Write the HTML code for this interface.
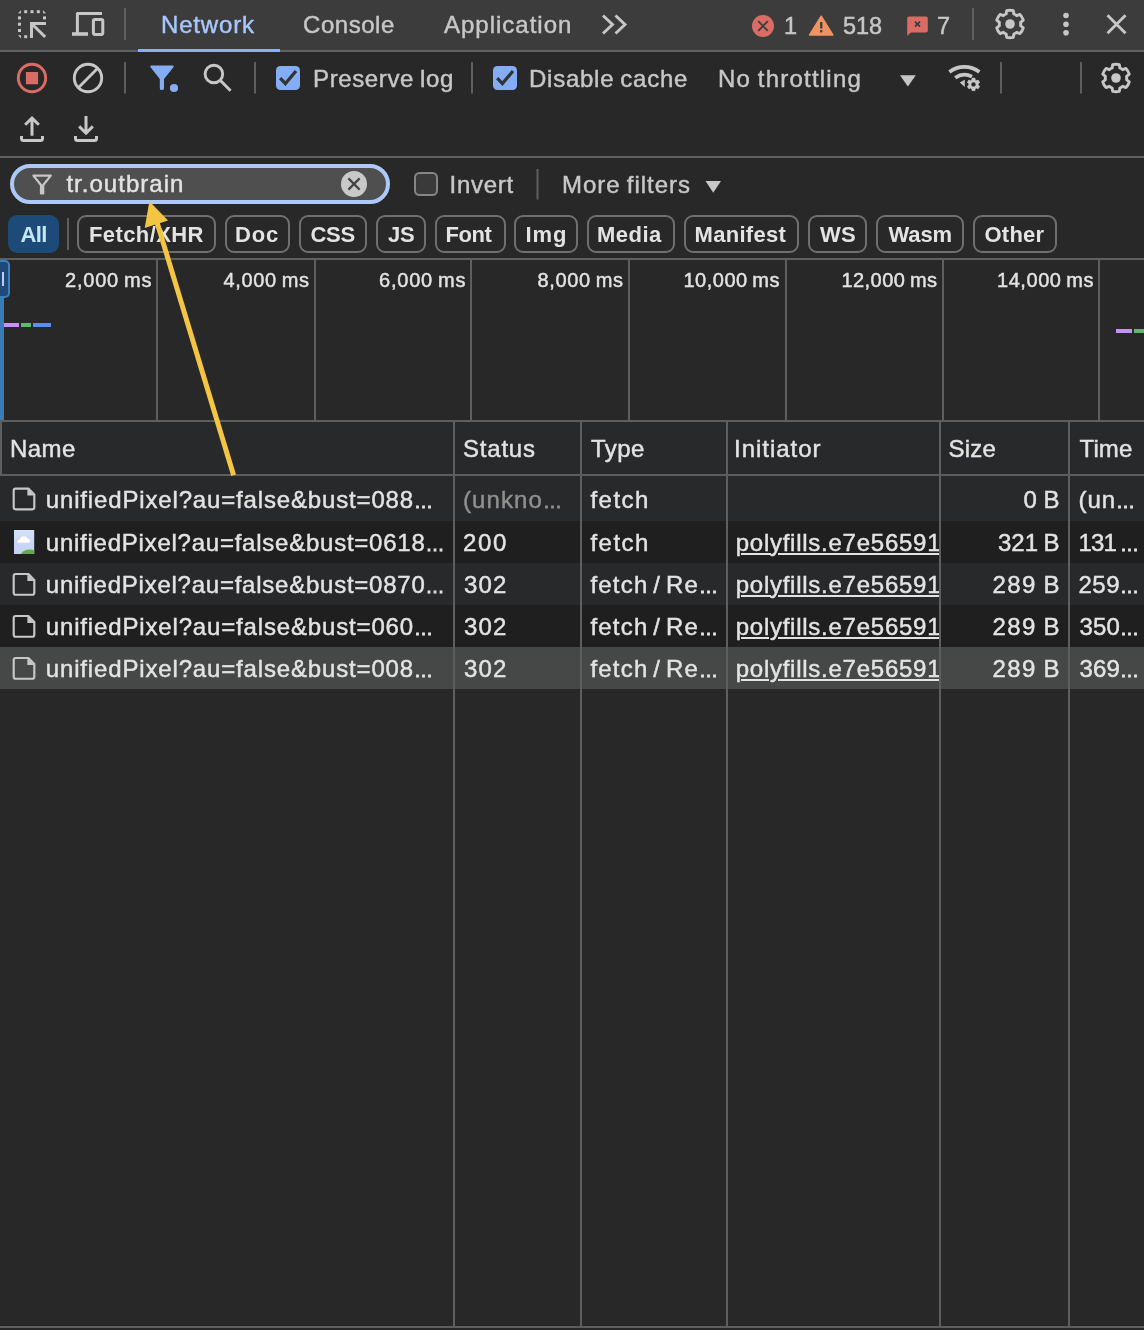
<!DOCTYPE html>
<html lang="en">
<head>
<meta charset="utf-8">
<title>DevTools - Network</title>
<style>
html,body{margin:0;padding:0;background:#282828;}
body{width:1144px;height:1330px;position:relative;overflow:hidden;font-family:"Liberation Sans",sans-serif;}
.a{position:absolute;}
.t{position:absolute;white-space:nowrap;line-height:1;font-family:"Liberation Sans",sans-serif;}
.ln{position:absolute;background:#5e5e5e;}
.pill{position:absolute;top:215px;height:38px;box-sizing:border-box;border:2px solid #6f6f6f;border-radius:9px;}
.pill.sel{border:none;background:#1d4a77;}
svg{position:absolute;left:0;top:0;}
</style>
</head>
<body>
<!-- backgrounds -->
<div class="a" style="left:0;top:0;width:1144px;height:50px;background:#3c3c3c"></div>
<div class="ln" style="left:0;top:50px;width:1144px;height:2px"></div>
<div class="a" style="left:138px;top:49px;width:142px;height:3px;background:#86b0f7"></div>
<div class="ln" style="left:0;top:156px;width:1144px;height:2px"></div>
<div class="ln" style="left:0;top:258px;width:1144px;height:2px"></div>
<!-- filter input -->
<div class="a" style="left:10px;top:163.8px;width:380px;height:40.4px;box-sizing:border-box;border:4.2px solid #adc9f8;border-radius:20.2px;background:#4f4f4f"></div>
<!-- invert checkbox -->
<div class="a" style="left:414px;top:172px;width:24px;height:24px;box-sizing:border-box;border:2px solid #858585;border-radius:5.5px;background:#3a3a3a"></div>
<!-- pills -->
<div class="pill sel" style="left:8px;width:51px"></div>
<div class="pill" style="left:77px;width:139px"></div>
<div class="pill" style="left:225px;width:65px"></div>
<div class="pill" style="left:298.5px;width:68.5px"></div>
<div class="pill" style="left:375.5px;width:50.5px"></div>
<div class="pill" style="left:434.5px;width:71.0px"></div>
<div class="pill" style="left:514px;width:64px"></div>
<div class="pill" style="left:586.5px;width:88.0px"></div>
<div class="pill" style="left:683.5px;width:115.0px"></div>
<div class="pill" style="left:807.5px;width:59.5px"></div>
<div class="pill" style="left:875.5px;width:88.0px"></div>
<div class="pill" style="left:972.5px;width:84.0px"></div>

<div class="ln" style="left:67px;top:218px;width:2px;height:32px"></div>
<!-- overview -->
<div class="ln" style="left:156px;top:260px;width:2px;height:160px"></div>
<div class="ln" style="left:313.5px;top:260px;width:2px;height:160px"></div>
<div class="ln" style="left:470px;top:260px;width:2px;height:160px"></div>
<div class="ln" style="left:627.5px;top:260px;width:2px;height:160px"></div>
<div class="ln" style="left:784.5px;top:260px;width:2px;height:160px"></div>
<div class="ln" style="left:942px;top:260px;width:2px;height:160px"></div>
<div class="ln" style="left:1098px;top:260px;width:2px;height:160px"></div>
<div class="a" style="left:0;top:297px;width:4px;height:123px;background:#397db4"></div>
<div class="a" style="left:-4px;top:260px;width:14px;height:38px;box-sizing:border-box;border:2px solid #3b80bf;border-radius:5px;background:#1f4a75"></div>
<div class="a" style="left:2px;top:272px;width:2.1px;height:14px;background:#b8ccff"></div>
<div class="a" style="left:4px;top:322.8px;width:15px;height:4.3px;background:#c891f5"></div>
<div class="a" style="left:20.8px;top:322.8px;width:10.2px;height:4.3px;background:#5fb86e"></div>
<div class="a" style="left:33px;top:322.8px;width:18px;height:4.3px;background:#5e8cee"></div>
<div class="a" style="left:1115.8px;top:328.8px;width:16.5px;height:4.2px;background:#c891f5"></div>
<div class="a" style="left:1134.4px;top:328.8px;width:10px;height:4.2px;background:#5fb86e"></div>
<!-- grid -->
<div class="a" style="left:0;top:422px;width:1144px;height:99px;background:#28292b"></div>
<div class="a" style="left:0;top:521px;width:1144px;height:42px;background:#1f1f1f"></div>
<div class="a" style="left:0;top:563px;width:1144px;height:42px;background:#28292b"></div>
<div class="a" style="left:0;top:605px;width:1144px;height:42px;background:#1f1f1f"></div>
<div class="a" style="left:0;top:647px;width:1144px;height:42px;background:#464848"></div>
<div class="ln" style="left:0;top:420px;width:1144px;height:2px"></div>
<div class="ln" style="left:0;top:474px;width:1144px;height:2px"></div>
<div class="ln" style="left:0;top:422px;width:2px;height:53px"></div>
<div class="ln" style="left:453px;top:422px;width:2px;height:904px"></div>
<div class="ln" style="left:580px;top:422px;width:2px;height:904px"></div>
<div class="ln" style="left:726px;top:422px;width:2px;height:904px"></div>
<div class="ln" style="left:939px;top:422px;width:2px;height:904px"></div>
<div class="ln" style="left:1068px;top:422px;width:2px;height:904px"></div>
<div class="ln" style="left:0;top:1326px;width:1144px;height:2px"></div>
<!-- texts -->
<div class="a" id="txt" style="left:0;top:0;width:1144px;height:1330px;will-change:transform">
<span class="t" style="left:161.00px;top:12.68px;font-size:24px;color:#a8c7fa;letter-spacing:0.830px;word-spacing:0px;-webkit-text-stroke:0.45px currentColor;">Network</span>
<span class="t" style="left:303.00px;top:12.68px;font-size:24px;color:#c7c7c7;letter-spacing:0.549px;word-spacing:0px;-webkit-text-stroke:0.45px currentColor;">Console</span>
<span class="t" style="left:444.00px;top:12.68px;font-size:24px;color:#c7c7c7;letter-spacing:0.994px;word-spacing:0px;-webkit-text-stroke:0.45px currentColor;">Application</span>
<span class="t" style="left:784.00px;top:14.81px;font-size:23.5px;color:#c7c7c7;letter-spacing:0.000px;word-spacing:0px;-webkit-text-stroke:0.45px currentColor;">1</span>
<span class="t" style="left:843.00px;top:14.81px;font-size:23.5px;color:#c7c7c7;letter-spacing:-0.070px;word-spacing:0px;-webkit-text-stroke:0.45px currentColor;">518</span>
<span class="t" style="left:937.00px;top:14.81px;font-size:23.5px;color:#c7c7c7;letter-spacing:0.000px;word-spacing:0px;-webkit-text-stroke:0.45px currentColor;">7</span>
<span class="t" style="left:313.00px;top:66.68px;font-size:24px;color:#c7c7c7;letter-spacing:0.629px;word-spacing:-1.3px;-webkit-text-stroke:0.45px currentColor;">Preserve log</span>
<span class="t" style="left:529.00px;top:66.68px;font-size:24px;color:#c7c7c7;letter-spacing:0.741px;word-spacing:-1.3px;-webkit-text-stroke:0.45px currentColor;">Disable cache</span>
<span class="t" style="left:718.00px;top:66.68px;font-size:24px;color:#c7c7c7;letter-spacing:1.229px;word-spacing:-1.3px;-webkit-text-stroke:0.45px currentColor;">No throttling</span>
<span class="t" style="left:66.40px;top:172.38px;font-size:24px;color:#e3e3e3;letter-spacing:1.021px;word-spacing:0px;-webkit-text-stroke:0.45px currentColor;">tr.outbrain</span>
<span class="t" style="left:449.60px;top:172.58px;font-size:24px;color:#c7c7c7;letter-spacing:0.709px;word-spacing:0px;-webkit-text-stroke:0.45px currentColor;">Invert</span>
<span class="t" style="left:562.00px;top:172.58px;font-size:24px;color:#c7c7c7;letter-spacing:0.965px;word-spacing:-1.3px;-webkit-text-stroke:0.45px currentColor;">More filters</span>
<span class="t" style="left:20.50px;top:224.08px;font-size:22px;color:#c2e7ff;letter-spacing:-0.600px;word-spacing:0px;-webkit-text-stroke:0px currentColor;font-weight:bold;">All</span>
<span class="t" style="left:89.00px;top:224.08px;font-size:22px;color:#e3e3e3;letter-spacing:0.394px;word-spacing:0px;-webkit-text-stroke:0px currentColor;font-weight:bold;">Fetch/XHR</span>
<span class="t" style="left:235.00px;top:224.08px;font-size:22px;color:#e3e3e3;letter-spacing:0.837px;word-spacing:0px;-webkit-text-stroke:0px currentColor;font-weight:bold;">Doc</span>
<span class="t" style="left:310.50px;top:224.08px;font-size:22px;color:#e3e3e3;letter-spacing:-0.281px;word-spacing:0px;-webkit-text-stroke:0px currentColor;font-weight:bold;">CSS</span>
<span class="t" style="left:388.00px;top:224.08px;font-size:22px;color:#e3e3e3;letter-spacing:-0.235px;word-spacing:0px;-webkit-text-stroke:0px currentColor;font-weight:bold;">JS</span>
<span class="t" style="left:445.50px;top:224.08px;font-size:22px;color:#e3e3e3;letter-spacing:-0.438px;word-spacing:0px;-webkit-text-stroke:0px currentColor;font-weight:bold;">Font</span>
<span class="t" style="left:525.50px;top:224.08px;font-size:22px;color:#e3e3e3;letter-spacing:0.913px;word-spacing:0px;-webkit-text-stroke:0px currentColor;font-weight:bold;">Img</span>
<span class="t" style="left:597.00px;top:224.08px;font-size:22px;color:#e3e3e3;letter-spacing:0.472px;word-spacing:0px;-webkit-text-stroke:0px currentColor;font-weight:bold;">Media</span>
<span class="t" style="left:694.50px;top:224.08px;font-size:22px;color:#e3e3e3;letter-spacing:0.299px;word-spacing:0px;-webkit-text-stroke:0px currentColor;font-weight:bold;">Manifest</span>
<span class="t" style="left:820.00px;top:224.08px;font-size:22px;color:#e3e3e3;letter-spacing:0.235px;word-spacing:0px;-webkit-text-stroke:0px currentColor;font-weight:bold;">WS</span>
<span class="t" style="left:888.50px;top:224.08px;font-size:22px;color:#e3e3e3;letter-spacing:-0.140px;word-spacing:0px;-webkit-text-stroke:0px currentColor;font-weight:bold;">Wasm</span>
<span class="t" style="left:984.50px;top:224.08px;font-size:22px;color:#e3e3e3;letter-spacing:0.222px;word-spacing:0px;-webkit-text-stroke:0px currentColor;font-weight:bold;">Other</span>
<span class="t" style="left:65.00px;top:270.27px;font-size:20px;color:#e3e3e3;letter-spacing:0.791px;word-spacing:-1.3px;-webkit-text-stroke:0.45px currentColor;">2,000 ms</span>
<span class="t" style="left:223.50px;top:270.27px;font-size:20px;color:#e3e3e3;letter-spacing:0.648px;word-spacing:-1.3px;-webkit-text-stroke:0.45px currentColor;">4,000 ms</span>
<span class="t" style="left:379.00px;top:270.27px;font-size:20px;color:#e3e3e3;letter-spacing:0.791px;word-spacing:-1.3px;-webkit-text-stroke:0.45px currentColor;">6,000 ms</span>
<span class="t" style="left:537.50px;top:270.27px;font-size:20px;color:#e3e3e3;letter-spacing:0.648px;word-spacing:-1.3px;-webkit-text-stroke:0.45px currentColor;">8,000 ms</span>
<span class="t" style="left:683.50px;top:270.27px;font-size:20px;color:#e3e3e3;letter-spacing:0.489px;word-spacing:-1.3px;-webkit-text-stroke:0.45px currentColor;">10,000 ms</span>
<span class="t" style="left:841.50px;top:270.27px;font-size:20px;color:#e3e3e3;letter-spacing:0.426px;word-spacing:-1.3px;-webkit-text-stroke:0.45px currentColor;">12,000 ms</span>
<span class="t" style="left:997.00px;top:270.27px;font-size:20px;color:#e3e3e3;letter-spacing:0.551px;word-spacing:-1.3px;-webkit-text-stroke:0.45px currentColor;">14,000 ms</span>
<span class="t" style="left:10.00px;top:436.98px;font-size:24px;color:#e3e3e3;letter-spacing:0.443px;word-spacing:0px;-webkit-text-stroke:0.45px currentColor;">Name</span>
<span class="t" style="left:463.00px;top:436.98px;font-size:24px;color:#e3e3e3;letter-spacing:0.792px;word-spacing:0px;-webkit-text-stroke:0.45px currentColor;">Status</span>
<span class="t" style="left:591.00px;top:436.98px;font-size:24px;color:#e3e3e3;letter-spacing:0.439px;word-spacing:0px;-webkit-text-stroke:0.45px currentColor;">Type</span>
<span class="t" style="left:734.00px;top:436.98px;font-size:24px;color:#e3e3e3;letter-spacing:0.974px;word-spacing:0px;-webkit-text-stroke:0.45px currentColor;">Initiator</span>
<span class="t" style="left:948.50px;top:436.98px;font-size:24px;color:#e3e3e3;letter-spacing:0.220px;word-spacing:0px;-webkit-text-stroke:0.45px currentColor;">Size</span>
<span class="t" style="left:1079.50px;top:436.98px;font-size:24px;color:#e3e3e3;letter-spacing:0.135px;word-spacing:0px;-webkit-text-stroke:0.45px currentColor;">Time</span>
<span class="t" style="left:45.80px;top:487.58px;font-size:24px;color:#e3e3e3;letter-spacing:0.842px;word-spacing:0px;-webkit-text-stroke:0.45px currentColor;">unifiedPixel?au=false&amp;bust=088<span style="font-size:19px;letter-spacing:0;-webkit-text-stroke-width:0.9px">…</span></span>
<span class="t" style="left:463.00px;top:487.58px;font-size:24px;color:#8f8f8f;letter-spacing:1.103px;word-spacing:0px;-webkit-text-stroke:0.45px currentColor;">(unkno<span style="font-size:19px;letter-spacing:0;-webkit-text-stroke-width:0.9px">…</span></span>
<span class="t" style="left:590.50px;top:487.58px;font-size:24px;color:#e3e3e3;letter-spacing:1.454px;word-spacing:0px;-webkit-text-stroke:0.45px currentColor;">fetch</span>
<span class="t" style="left:1023.50px;top:487.58px;font-size:24px;color:#e3e3e3;letter-spacing:0.642px;word-spacing:-1.3px;-webkit-text-stroke:0.45px currentColor;">0 B</span>
<span class="t" style="left:1078.50px;top:487.58px;font-size:24px;color:#e3e3e3;letter-spacing:0.938px;word-spacing:0px;-webkit-text-stroke:0.45px currentColor;">(un<span style="font-size:19px;letter-spacing:0;-webkit-text-stroke-width:0.9px">…</span></span>
<span class="t" style="left:45.80px;top:530.53px;font-size:24px;color:#e3e3e3;letter-spacing:0.756px;word-spacing:0px;-webkit-text-stroke:0.45px currentColor;">unifiedPixel?au=false&amp;bust=0618<span style="font-size:19px;letter-spacing:0;-webkit-text-stroke-width:0.9px">…</span></span>
<span class="t" style="left:463.00px;top:530.53px;font-size:24px;color:#e3e3e3;letter-spacing:1.652px;word-spacing:0px;-webkit-text-stroke:0.45px currentColor;">200</span>
<span class="t" style="left:590.50px;top:530.53px;font-size:24px;color:#e3e3e3;letter-spacing:1.454px;word-spacing:0px;-webkit-text-stroke:0.45px currentColor;">fetch</span>
<span class="t" style="left:735.70px;top:530.53px;font-size:24px;color:#e3e3e3;letter-spacing:0.747px;word-spacing:0px;-webkit-text-stroke:0.45px currentColor;text-decoration:underline;text-decoration-thickness:1.9px;text-underline-offset:1.7px;overflow:hidden;padding-bottom:5px;width:203.70px;">polyfills.e7e56591</span>
<span class="t" style="left:998.00px;top:530.53px;font-size:24px;color:#e3e3e3;letter-spacing:0.022px;word-spacing:-1.3px;-webkit-text-stroke:0.45px currentColor;">321 B</span>
<span class="t" style="left:1078.50px;top:530.53px;font-size:24px;color:#e3e3e3;letter-spacing:-0.803px;word-spacing:-2px;-webkit-text-stroke:0.45px currentColor;">131 <span style="font-size:19px;letter-spacing:0;-webkit-text-stroke-width:0.9px">…</span></span>
<span class="t" style="left:45.80px;top:572.68px;font-size:24px;color:#e3e3e3;letter-spacing:0.756px;word-spacing:0px;-webkit-text-stroke:0.45px currentColor;">unifiedPixel?au=false&amp;bust=0870<span style="font-size:19px;letter-spacing:0;-webkit-text-stroke-width:0.9px">…</span></span>
<span class="t" style="left:464.00px;top:572.68px;font-size:24px;color:#e3e3e3;letter-spacing:1.152px;word-spacing:0px;-webkit-text-stroke:0.45px currentColor;">302</span>
<span class="t" style="left:590.50px;top:572.68px;font-size:24px;color:#e3e3e3;letter-spacing:1.179px;word-spacing:-3px;-webkit-text-stroke:0.45px currentColor;">fetch / Re<span style="font-size:19px;letter-spacing:0;-webkit-text-stroke-width:0.9px">…</span></span>
<span class="t" style="left:735.70px;top:572.68px;font-size:24px;color:#e3e3e3;letter-spacing:0.747px;word-spacing:0px;-webkit-text-stroke:0.45px currentColor;text-decoration:underline;text-decoration-thickness:1.9px;text-underline-offset:1.7px;overflow:hidden;padding-bottom:5px;width:203.70px;">polyfills.e7e56591</span>
<span class="t" style="left:992.50px;top:572.68px;font-size:24px;color:#e3e3e3;letter-spacing:1.397px;word-spacing:-1.3px;-webkit-text-stroke:0.45px currentColor;">289 B</span>
<span class="t" style="left:1078.50px;top:572.68px;font-size:24px;color:#e3e3e3;letter-spacing:0.486px;word-spacing:0px;-webkit-text-stroke:0.45px currentColor;">259<span style="font-size:19px;letter-spacing:0;-webkit-text-stroke-width:0.9px">…</span></span>
<span class="t" style="left:45.80px;top:614.83px;font-size:24px;color:#e3e3e3;letter-spacing:0.842px;word-spacing:0px;-webkit-text-stroke:0.45px currentColor;">unifiedPixel?au=false&amp;bust=060<span style="font-size:19px;letter-spacing:0;-webkit-text-stroke-width:0.9px">…</span></span>
<span class="t" style="left:464.00px;top:614.83px;font-size:24px;color:#e3e3e3;letter-spacing:1.152px;word-spacing:0px;-webkit-text-stroke:0.45px currentColor;">302</span>
<span class="t" style="left:590.50px;top:614.83px;font-size:24px;color:#e3e3e3;letter-spacing:1.179px;word-spacing:-3px;-webkit-text-stroke:0.45px currentColor;">fetch / Re<span style="font-size:19px;letter-spacing:0;-webkit-text-stroke-width:0.9px">…</span></span>
<span class="t" style="left:735.70px;top:614.83px;font-size:24px;color:#e3e3e3;letter-spacing:0.747px;word-spacing:0px;-webkit-text-stroke:0.45px currentColor;text-decoration:underline;text-decoration-thickness:1.9px;text-underline-offset:1.7px;overflow:hidden;padding-bottom:5px;width:203.70px;">polyfills.e7e56591</span>
<span class="t" style="left:992.50px;top:614.83px;font-size:24px;color:#e3e3e3;letter-spacing:1.397px;word-spacing:-1.3px;-webkit-text-stroke:0.45px currentColor;">289 B</span>
<span class="t" style="left:1079.50px;top:614.83px;font-size:24px;color:#e3e3e3;letter-spacing:0.152px;word-spacing:0px;-webkit-text-stroke:0.45px currentColor;">350<span style="font-size:19px;letter-spacing:0;-webkit-text-stroke-width:0.9px">…</span></span>
<span class="t" style="left:45.80px;top:656.98px;font-size:24px;color:#e3e3e3;letter-spacing:0.842px;word-spacing:0px;-webkit-text-stroke:0.45px currentColor;">unifiedPixel?au=false&amp;bust=008<span style="font-size:19px;letter-spacing:0;-webkit-text-stroke-width:0.9px">…</span></span>
<span class="t" style="left:464.00px;top:656.98px;font-size:24px;color:#e3e3e3;letter-spacing:1.152px;word-spacing:0px;-webkit-text-stroke:0.45px currentColor;">302</span>
<span class="t" style="left:590.50px;top:656.98px;font-size:24px;color:#e3e3e3;letter-spacing:1.179px;word-spacing:-3px;-webkit-text-stroke:0.45px currentColor;">fetch / Re<span style="font-size:19px;letter-spacing:0;-webkit-text-stroke-width:0.9px">…</span></span>
<span class="t" style="left:735.70px;top:656.98px;font-size:24px;color:#e3e3e3;letter-spacing:0.747px;word-spacing:0px;-webkit-text-stroke:0.45px currentColor;text-decoration:underline;text-decoration-thickness:1.9px;text-underline-offset:1.7px;overflow:hidden;padding-bottom:5px;width:203.70px;">polyfills.e7e56591</span>
<span class="t" style="left:992.50px;top:656.98px;font-size:24px;color:#e3e3e3;letter-spacing:1.397px;word-spacing:-1.3px;-webkit-text-stroke:0.45px currentColor;">289 B</span>
<span class="t" style="left:1079.50px;top:656.98px;font-size:24px;color:#e3e3e3;letter-spacing:0.152px;word-spacing:0px;-webkit-text-stroke:0.45px currentColor;">369<span style="font-size:19px;letter-spacing:0;-webkit-text-stroke-width:0.9px">…</span></span>
</div>
<!-- icons -->
<svg width="1144" height="1330" viewBox="0 0 1144 1330" fill="none">
<rect x="24.2" y="10.2" width="3" height="3" fill="#c7c7c7"/>
<rect x="30.5" y="10.2" width="3" height="3" fill="#c7c7c7"/>
<rect x="36.8" y="10.2" width="3" height="3" fill="#c7c7c7"/>
<rect x="18" y="16.4" width="3" height="3" fill="#c7c7c7"/>
<rect x="18" y="22.7" width="3" height="3" fill="#c7c7c7"/>
<rect x="18" y="29" width="3" height="3" fill="#c7c7c7"/>
<rect x="43" y="16.4" width="3" height="3" fill="#c7c7c7"/>
<rect x="24.2" y="35.2" width="3" height="3" fill="#c7c7c7"/>
<path d="M21,10.2V13.2H18Z M43,10.2L46,13.2H43Z M18,35.2L21,38.2V35.2Z" fill="#c7c7c7"/>
<path d="M46,23.5H31.5V38" stroke="#c7c7c7" stroke-width="3"/>
<path d="M32.5,24.5L45.2,37" stroke="#c7c7c7" stroke-width="3"/>
<path d="M102,13.4H77.4V33" stroke="#c7c7c7" stroke-width="3" stroke-linejoin="round"/>
<path d="M72,34H88" stroke="#c7c7c7" stroke-width="3.6"/>
<rect x="93.4" y="19.4" width="9.4" height="15" rx="1.6" stroke="#c7c7c7" stroke-width="3"/>
<rect x="124" y="8" width="2" height="32" fill="#5e5e5e"/>
<rect x="972" y="8" width="2" height="32" fill="#5e5e5e"/>
<path d="M603,15.5L612.5,24.5L603,33.5M615.5,15.5L625,24.5L615.5,33.5" stroke="#c7c7c7" stroke-width="2.9"/>
<circle cx="763" cy="26" r="11" fill="#d96c65"/>
<path d="M758.2,21.2L767.8,30.8M767.8,21.2L758.2,30.8" stroke="#3c3c3c" stroke-width="1.8"/>
<path d="M821.2,16.2L832.8,35H809.6Z" fill="#ee9462" stroke="#ee9462" stroke-width="1.5" stroke-linejoin="round"/>
<rect x="820.1" y="22" width="2.3" height="6.5" fill="#3c3c3c"/><rect x="820.1" y="30" width="2.3" height="2.4" fill="#3c3c3c"/>
<path d="M909,16.5H926Q927.8,16.5 927.8,18.3V30.7Q927.8,32.5 926,32.5H911L907.2,36V18.3Q907.2,16.5 909,16.5Z" fill="#d96c65"/>
<path d="M915,21.7L920,26.7M920,21.7L915,26.7" stroke="#3c3c3c" stroke-width="1.8"/>
<path d="M1013.83,14.01L1013.34,10.61A13.80,13.80 0 0 0 1006.66,10.61L1006.17,14.01A10.70,10.70 0 0 0 1003.27,15.68L1000.07,14.41A13.80,13.80 0 0 0 996.73,20.20L999.43,22.33A10.70,10.70 0 0 0 999.43,25.67L996.73,27.80A13.80,13.80 0 0 0 1000.07,33.59L1003.27,32.32A10.70,10.70 0 0 0 1006.17,33.99L1006.66,37.39A13.80,13.80 0 0 0 1013.34,37.39L1013.83,33.99A10.70,10.70 0 0 0 1016.73,32.32L1019.93,33.59A13.80,13.80 0 0 0 1023.27,27.80L1020.57,25.67A10.70,10.70 0 0 0 1020.57,22.33L1023.27,20.20A13.80,13.80 0 0 0 1019.93,14.41L1016.73,15.68A10.70,10.70 0 0 0 1013.83,14.01Z" stroke="#c7c7c7" stroke-width="2.9" stroke-linejoin="round"/>
<circle cx="1010" cy="24" r="4.8" fill="#c7c7c7"/>
<circle cx="1066" cy="15.5" r="2.8" fill="#c7c7c7"/>
<circle cx="1066" cy="24.2" r="2.8" fill="#c7c7c7"/>
<circle cx="1066" cy="32.7" r="2.8" fill="#c7c7c7"/>
<path d="M1107.5,15.2L1125.5,33.2M1125.5,15.2L1107.5,33.2" stroke="#c7c7c7" stroke-width="2.9"/>
<circle cx="32" cy="78" r="13.7" stroke="#d96c65" stroke-width="2.9"/>
<rect x="25.9" y="72.1" width="12.2" height="12.2" rx="0.4" fill="#d96c65"/>
<circle cx="88" cy="78" r="13.7" stroke="#c7c7c7" stroke-width="2.9"/>
<path d="M78.3,87.7L97.7,68.3" stroke="#c7c7c7" stroke-width="2.9"/>
<rect x="124" y="62" width="2" height="31.5" fill="#5e5e5e"/>
<rect x="254" y="62" width="2" height="31.5" fill="#5e5e5e"/>
<rect x="471" y="62" width="2" height="31.5" fill="#5e5e5e"/>
<rect x="1000" y="62" width="2" height="31.5" fill="#5e5e5e"/>
<rect x="1080" y="62" width="2" height="31.5" fill="#5e5e5e"/>
<path d="M151.4,65.6H172.6Q174.6,65.6 173.4,67.2L164,79V88.2Q164,90.1 162,90.1H161.8Q159.8,90.1 159.8,88.2V79L150.6,67.2Q149.4,65.6 151.4,65.6Z" fill="#84adf5"/>
<circle cx="174" cy="88" r="4.1" fill="#84adf5"/>
<circle cx="213.9" cy="74" r="8.8" stroke="#c7c7c7" stroke-width="2.9"/>
<path d="M220.3,80.4L230.6,90.7" stroke="#c7c7c7" stroke-width="2.9"/>
<rect x="276" y="66" width="24" height="24" rx="4.5" fill="#84adf5"/>
<path d="M280.2,78.2L285.4,83.6L296,71" stroke="#333333" stroke-width="3.2"/>
<rect x="493" y="66" width="24" height="24" rx="4.5" fill="#84adf5"/>
<path d="M497.2,78.2L502.4,83.6L513,71" stroke="#333333" stroke-width="3.2"/>
<path d="M900,75.2H915.8L907.9,86.6Z" fill="#c7c7c7"/>
<path d="M949.4,72A24.6,24.6 0 0 1 979.4,72" stroke="#c7c7c7" stroke-width="3.6"/>
<path d="M955.2,77.8A16.5,16.5 0 0 1 972,76.6" stroke="#c7c7c7" stroke-width="3.6"/>
<path d="M959.8,82.4L964.8,79.8V86.9Z" fill="#c7c7c7"/>
<path d="M975.22,80.13L974.92,78.26A6.30,6.30 0 0 0 972.08,78.26L971.78,80.13A4.60,4.60 0 0 0 970.67,80.78L968.89,80.10A6.30,6.30 0 0 0 967.48,82.56L968.94,83.76A4.60,4.60 0 0 0 968.94,85.04L967.48,86.24A6.30,6.30 0 0 0 968.89,88.70L970.67,88.02A4.60,4.60 0 0 0 971.78,88.67L972.08,90.54A6.30,6.30 0 0 0 974.92,90.54L975.22,88.67A4.60,4.60 0 0 0 976.33,88.02L978.11,88.70A6.30,6.30 0 0 0 979.52,86.24L978.06,85.04A4.60,4.60 0 0 0 978.06,83.76L979.52,82.56A6.30,6.30 0 0 0 978.11,80.10L976.33,80.78A4.60,4.60 0 0 0 975.22,80.13Z" fill="#c7c7c7" stroke="#c7c7c7" stroke-width="0.8" stroke-linejoin="round"/>
<circle cx="973.5" cy="84.4" r="2.2" fill="#282828"/>
<path d="M1119.83,68.01L1119.34,64.61A13.80,13.80 0 0 0 1112.66,64.61L1112.17,68.01A10.70,10.70 0 0 0 1109.27,69.68L1106.07,68.41A13.80,13.80 0 0 0 1102.73,74.20L1105.43,76.33A10.70,10.70 0 0 0 1105.43,79.67L1102.73,81.80A13.80,13.80 0 0 0 1106.07,87.59L1109.27,86.32A10.70,10.70 0 0 0 1112.17,87.99L1112.66,91.39A13.80,13.80 0 0 0 1119.34,91.39L1119.83,87.99A10.70,10.70 0 0 0 1122.73,86.32L1125.93,87.59A13.80,13.80 0 0 0 1129.27,81.80L1126.57,79.67A10.70,10.70 0 0 0 1126.57,76.33L1129.27,74.20A13.80,13.80 0 0 0 1125.93,68.41L1122.73,69.68A10.70,10.70 0 0 0 1119.83,68.01Z" stroke="#c7c7c7" stroke-width="2.9" stroke-linejoin="round"/>
<circle cx="1116" cy="78" r="4.8" fill="#c7c7c7"/>
<path d="M21.5,136V138.5Q21.5,140.5 23.5,140.5H40.5Q42.5,140.5 42.5,138.5V136" stroke="#c7c7c7" stroke-width="3"/>
<path d="M32,135.7V118M25.2,124.8L32,118L38.8,124.8" stroke="#c7c7c7" stroke-width="3"/>
<path d="M75.5,136V138.5Q75.5,140.5 77.5,140.5H94.5Q96.5,140.5 96.5,138.5V136" stroke="#c7c7c7" stroke-width="3"/>
<path d="M86,116V133M79.2,126.4L86,133.2L92.8,126.4" stroke="#c7c7c7" stroke-width="3"/>
<rect x="536.5" y="169" width="2" height="30.5" fill="#5e5e5e"/>
<path d="M33.4,175.6H50.8L43.2,185V193.5H41V185Z" fill="none" stroke="#c7c7c7" stroke-width="2.2" stroke-linejoin="round"/>
<circle cx="354" cy="184" r="13" fill="#c9c9c9"/>
<path d="M348.4,178.4L359.6,189.6M359.6,178.4L348.4,189.6" stroke="#444444" stroke-width="2.2"/>
<path d="M705.5,181H721L713.25,192.7Z" fill="#c7c7c7"/>
<path d="M15.7,488.6H28.4L34.3,494.5V507.3Q34.3,509.3 32.3,509.3H15.7Q13.7,509.3 13.7,507.3V490.6Q13.7,488.6 15.7,488.6Z" stroke="#c7c7c7" stroke-width="2.15" stroke-linejoin="round"/>
<path d="M27.4,488.6V495.5H34.3Z" fill="#c7c7c7"/>
<path d="M15.7,574.0H28.4L34.3,579.9V592.7Q34.3,594.7 32.3,594.7H15.7Q13.7,594.7 13.7,592.7V576.0Q13.7,574.0 15.7,574.0Z" stroke="#c7c7c7" stroke-width="2.15" stroke-linejoin="round"/>
<path d="M27.4,574.0V580.9H34.3Z" fill="#c7c7c7"/>
<path d="M15.7,616.0H28.4L34.3,621.9V634.7Q34.3,636.7 32.3,636.7H15.7Q13.7,636.7 13.7,634.7V618.0Q13.7,616.0 15.7,616.0Z" stroke="#c7c7c7" stroke-width="2.15" stroke-linejoin="round"/>
<path d="M27.4,616.0V622.9H34.3Z" fill="#c7c7c7"/>
<path d="M15.7,658.0H28.4L34.3,663.9V676.7Q34.3,678.7 32.3,678.7H15.7Q13.7,678.7 13.7,676.7V660.0Q13.7,658.0 15.7,658.0Z" stroke="#c7c7c7" stroke-width="2.15" stroke-linejoin="round"/>
<path d="M27.4,658.0V664.9H34.3Z" fill="#c7c7c7"/>
<defs><linearGradient id="sky" x1="0" y1="0" x2="0" y2="1"><stop offset="0" stop-color="#d4e1f9"/><stop offset="1" stop-color="#c3d0f0"/></linearGradient><clipPath id="imgc"><rect x="14" y="530" width="20.2" height="24"/></clipPath></defs>
<rect x="14" y="530" width="20.2" height="24" fill="url(#sky)"/>
<g clip-path="url(#imgc)"><ellipse cx="29.5" cy="557" rx="9.5" ry="7.6" fill="#6aa84f"/></g>
<path d="M18.6,542.8Q17.2,542.8 17.4,541.4Q17.8,539.6 19.8,539.4Q20.6,536.2 23.8,536.2Q26.6,536.2 27.6,538.6Q30,538.8 30,541Q30,542.8 28.4,542.8Z" fill="#ffffff"/>
<rect x="939" y="521" width="2" height="168" fill="#5e5e5e"/>
<path d="M233.6,475.3L156,219" stroke="#f4c542" stroke-width="5"/>
<path d="M149.4,201.3L144.7,228L168,220.6Z" fill="#f4c542"/>
</svg>
</body>
</html>
